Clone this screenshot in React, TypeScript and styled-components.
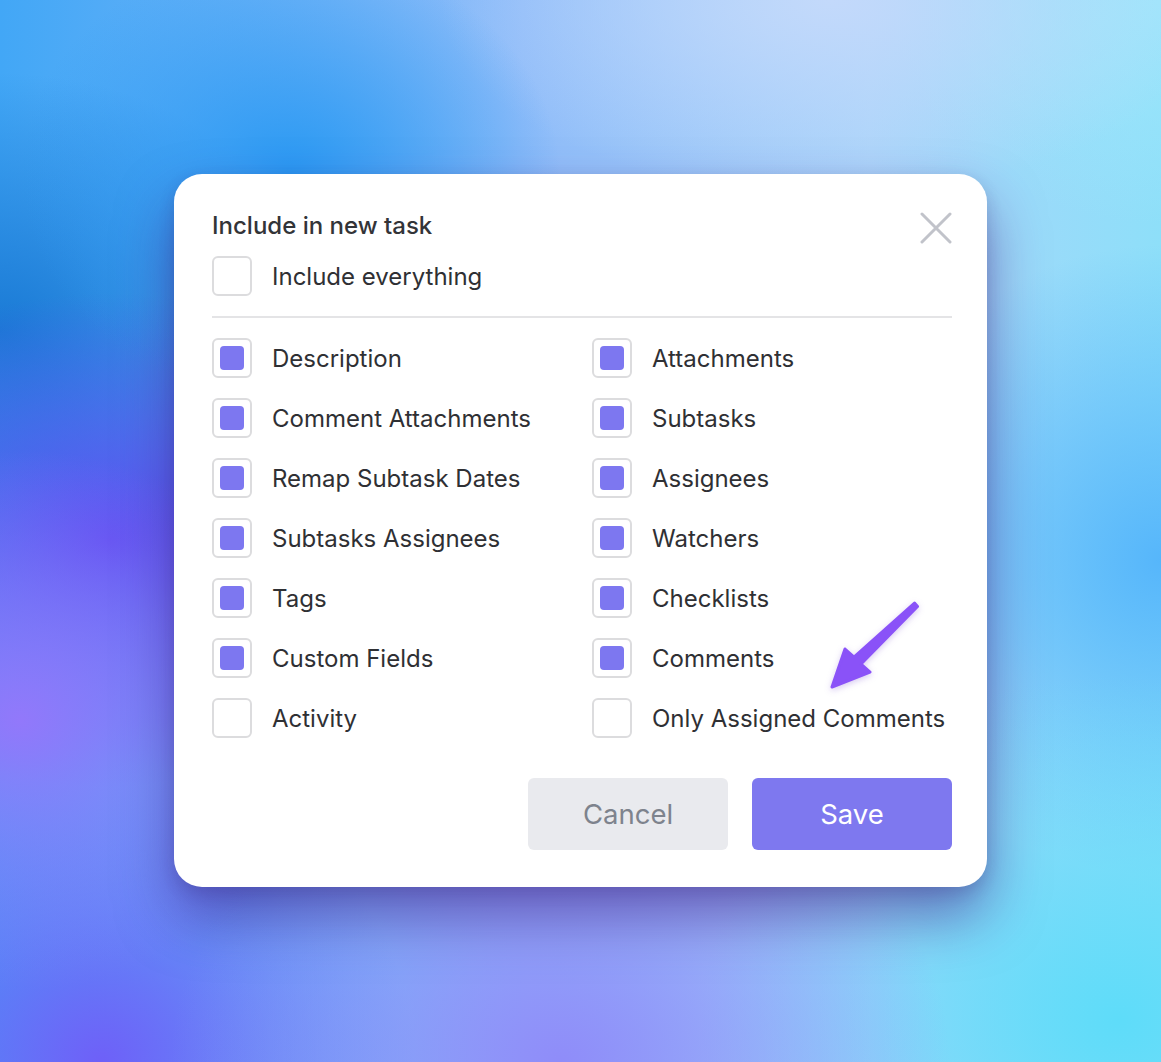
import React from "react";
import styled, { createGlobalStyle } from "styled-components";

const GlobalStyle = createGlobalStyle`
  html, body { margin: 0; padding: 0; }
  body { font-family: Inter, "Noto Sans", "Liberation Sans", sans-serif; }
  * { box-sizing: border-box; }
`;

const Page = styled.div`
  width: 100vw;
  min-height: 1062px;
  padding: 174px 0 175px;
  display: flex;
  justify-content: center;
  align-items: flex-start;
  overflow: hidden;
  background:
    radial-gradient(ellipse 360px 300px at 290px 175px, #2a99f3 0%, rgba(42,153,243,0) 75%),
    radial-gradient(ellipse 420px 360px at 20px 720px, #9278fb 0%, rgba(146,120,251,0) 75%),
    radial-gradient(ellipse 460px 330px at 110px 540px, #5a4cf0 0%, rgba(90,76,240,0) 75%),
    radial-gradient(ellipse 420px 330px at 0px 330px, #1a7ad5 0%, rgba(26,122,213,0) 78%),
    radial-gradient(ellipse 520px 420px at 560px 1062px, #8f8cf9 0%, rgba(143,140,249,0) 75%),
    radial-gradient(ellipse 560px 460px at 1120px 1020px, #5edcf9 0%, rgba(94,220,249,0) 75%),
    radial-gradient(ellipse 420px 420px at 1161px 560px, #56b6fb 0%, rgba(86,182,251,0) 75%),
    radial-gradient(ellipse 520px 260px at 830px 0px, #c3d9fb 0%, rgba(195,217,251,0) 75%),
    radial-gradient(ellipse 360px 300px at 1161px 0px, #9de6fb 0%, rgba(157,230,251,0) 75%),
    radial-gradient(ellipse 420px 400px at 100px 1062px, #6e60f8 0%, rgba(110,96,248,0) 75%),
    linear-gradient(90deg, #42a7f6 0%, #8fbcf9 45%, #a9d4fa 75%, #8edff9 100%);
`;

const Card = styled.div`
  position: relative;
  width: 813px;
  height: 713px;
  background: #ffffff;
  border-radius: 28px;
  padding: 38px 35px 37px 38px;
  display: flex;
  flex-direction: column;
  box-shadow: 0 30px 55px rgba(60, 20, 130, 0.5), 0 6px 16px rgba(40, 30, 90, 0.16);
`;

const Header = styled.div`
  display: flex;
  justify-content: space-between;
  align-items: flex-start;
  height: 32px;
`;

const Title = styled.h2`
  margin: 0;
  font-size: 24px;
  line-height: 28px;
  font-weight: 500;
  color: #333438;
`;

const CloseButton = styled.button`
  width: 32px;
  height: 32px;
  padding: 0;
  border: none;
  background: none;
  cursor: pointer;
  display: flex;
  align-items: center;
  justify-content: center;
`;

const Row = styled.label`
  display: flex;
  align-items: center;
  gap: 20px;
  height: 40px;
  cursor: pointer;
`;

const TopRow = styled(Row)`
  margin-top: 12px;
`;

const Box = styled.span<{ $checked: boolean }>`
  width: 40px;
  height: 40px;
  flex: none;
  border: 2px solid #dcdcde;
  border-radius: 6px;
  background: #fff;
  display: flex;
  align-items: center;
  justify-content: center;
  &::after {
    content: "";
    width: 24px;
    height: 24px;
    border-radius: 4px;
    background: ${(p) => (p.$checked ? "#7d77f0" : "transparent")};
  }
`;

const Label = styled.span`
  font-size: 24px;
  line-height: 28px;
  padding-top: 2px;
  color: #2f3034;
  white-space: nowrap;
`;

const Divider = styled.hr`
  margin: 20px 0 0 0;
  border: none;
  height: 2px;
  background: #e4e4e6;
`;

const Grid = styled.div`
  margin-top: 20px;
  display: grid;
  grid-template-columns: 380px 1fr;
  row-gap: 20px;
`;

const Footer = styled.div`
  margin-top: 40px;
  display: flex;
  justify-content: flex-end;
  gap: 24px;
`;

const Button = styled.button<{ $primary?: boolean }>`
  width: 200px;
  height: 72px;
  border: none;
  border-radius: 6px;
  font-family: inherit;
  font-size: 27.5px;
  font-weight: 400;
  cursor: pointer;
  background: ${(p) => (p.$primary ? "#7e78ef" : "#e9eaee")};
  color: ${(p) => (p.$primary ? "#ffffff" : "#7e838d")};
`;

const Arrow = styled.svg`
  position: absolute;
  left: 646px;
  top: 416px;
  width: 110px;
  height: 110px;
  filter: drop-shadow(0 2px 3px rgba(90, 40, 200, 0.25));
`;

const left: [string, boolean][] = [
  ["Description", true],
  ["Comment Attachments", true],
  ["Remap Subtask Dates", true],
  ["Subtasks Assignees", true],
  ["Tags", true],
  ["Custom Fields", true],
  ["Activity", false],
];

const right: [string, boolean][] = [
  ["Attachments", true],
  ["Subtasks", true],
  ["Assignees", true],
  ["Watchers", true],
  ["Checklists", true],
  ["Comments", true],
  ["Only Assigned Comments", false],
];

const Check = ({ label, checked }: { label: string; checked: boolean }) => (
  <Row>
    <Box $checked={checked} />
    <Label>{label}</Label>
  </Row>
);

export default function App() {
  const cells: React.ReactNode[] = [];
  left.forEach((l, i) => {
    cells.push(<Check key={"l" + i} label={l[0]} checked={l[1]} />);
    cells.push(<Check key={"r" + i} label={right[i][0]} checked={right[i][1]} />);
  });
  return (
    <>
      <GlobalStyle />
      <Page>
        <Card>
          <Header>
            <Title>Include in new task</Title>
            <CloseButton aria-label="Close">
              <svg width="32" height="32" viewBox="0 0 32 32">
                <path
                  d="M2 2 L30 30 M30 2 L2 30"
                  stroke="#c1c3ca"
                  strokeWidth="3"
                  strokeLinecap="round"
                  fill="none"
                />
              </svg>
            </CloseButton>
          </Header>
          <TopRow>
            <Box $checked={false} />
            <Label>Include everything</Label>
          </TopRow>
          <Divider />
          <Grid>{cells}</Grid>
          <Footer>
            <Button>Cancel</Button>
            <Button $primary>Save</Button>
          </Footer>
          <Arrow viewBox="0 0 110 110">
            <polygon
              points="12,97 25,59 34,67 94.5,13 97.5,16.5 41,74 50,82"
              fill="#8a52f8"
              stroke="#8a52f8"
              strokeWidth="3"
              strokeLinejoin="round"
            />
          </Arrow>
        </Card>
      </Page>
    </>
  );
}
